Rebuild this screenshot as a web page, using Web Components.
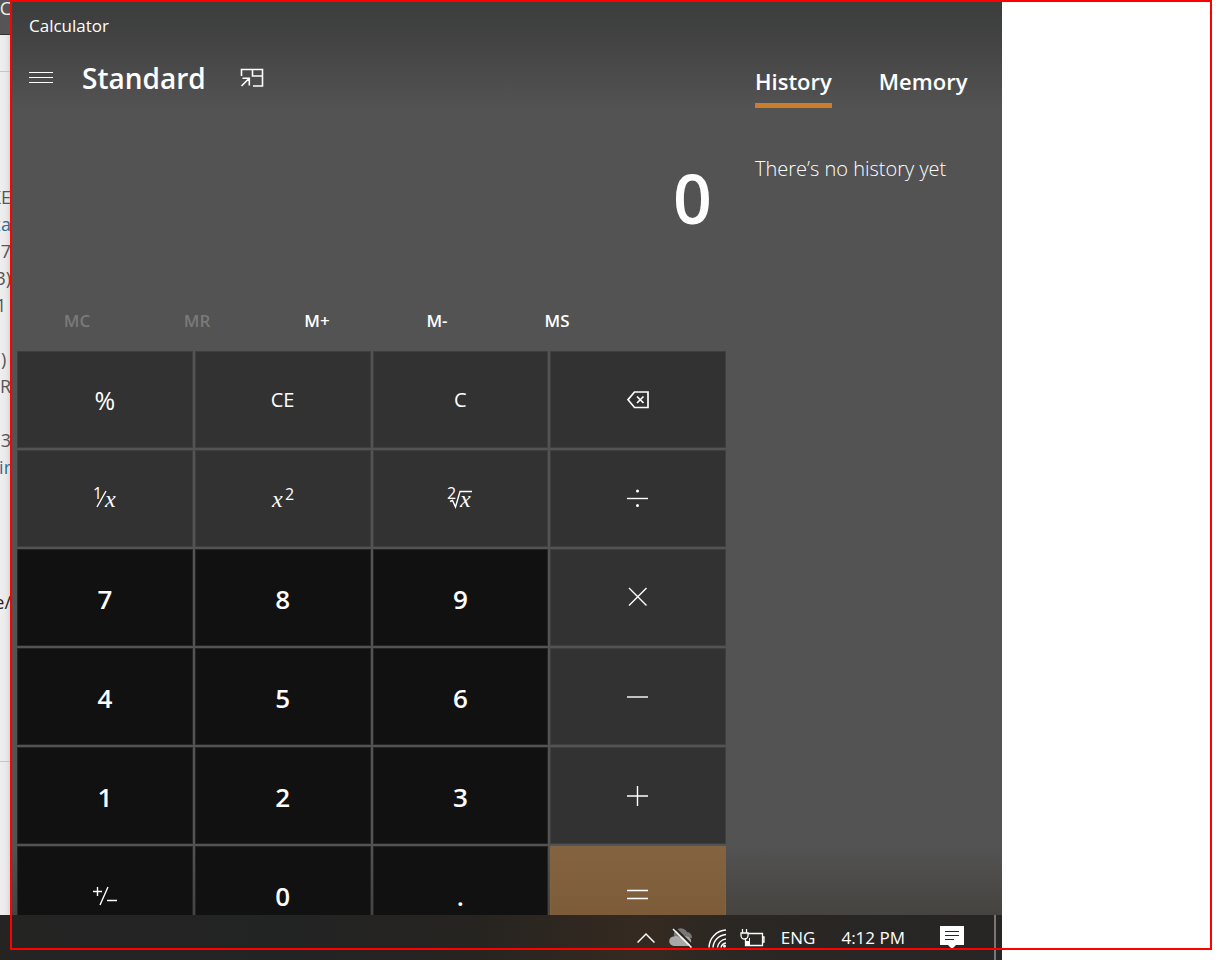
<!DOCTYPE html>
<html lang="en">
<head>
<meta charset="utf-8">
<title>Calculator</title>
<style>
  html, body { margin: 0; height: 100%; background: #fff; }
  body { font-family: "Open Sans", "Noto Sans", sans-serif; color: #fff; }
</style>
</head>
<body>
<desktop-view>
  <page-edge slot="behind"></page-edge>
  <calc-window slot="window">
    <history-panel slot="side"></history-panel>
  </calc-window>
  <task-bar slot="bar"></task-bar>
</desktop-view>

<template id="desktop-view">
  <style>
    :host { display: block; position: relative; height: 100vh; overflow: hidden; }
    .screen { margin-right: 220px; height: 100%; display: flex; flex-direction: column; }
    .work { flex: 1; min-height: 0; display: flex; }
    ::slotted([slot=behind]) { flex: 0 0 12px; }
    ::slotted([slot=window]) { flex: 1; min-width: 0; }
    .frame { position: absolute; inset: 0 10px 10px 10px; border: 2px solid #f00; pointer-events: none; }
  </style>
  <div class="screen">
    <div class="work"><slot name="behind"></slot><slot name="window"></slot></div>
    <slot name="bar"></slot>
  </div>
  <div class="frame"></div>
</template>

<template id="page-edge">
  <style>
    :host { display: flex; flex-direction: column; overflow: hidden; color: #555; font-size: 18px; line-height: 27px;
      background: linear-gradient(90deg, #efefef, #e9e9e9 50%, #d2d2d2); }
    .line { display: flex; justify-content: flex-end; height: 27px; padding-right: 1px; white-space: pre; }
    .top { height: 34px; background: #555; border-bottom: 1px solid #333; color: #eee; }
    .top .line { height: 16px; line-height: 16px; }
    .bar { height: 36px; border-bottom: 1px solid #c4c4c4; }
    .text { padding-top: 112px; height: 577px; border-bottom: 1px solid #c4c4c4; }
    .blue { color: #2f6c96; }
    .dark { color: #222; }
  </style>
  <div class="top"><div class="line">TC</div></div>
  <div class="bar"></div>
  <div class="text">
    <div class="line">KE</div>
    <div class="line blue">xa</div>
    <div class="line">7</div>
    <div class="line">3)</div>
    <div class="line">1 </div>
    <div class="line"></div>
    <div class="line">) </div>
    <div class="line">R</div>
    <div class="line"></div>
    <div class="line">3</div>
    <div class="line blue">ir</div>
    <div class="line"></div>
    <div class="line"></div>
    <div class="line"></div>
    <div class="line"></div>
    <div class="line dark">e/</div>
  </div>
</template>

<template id="calc-window">
  <style>
    :host { display: flex; overflow: hidden;
      background: linear-gradient(#3b3c3c, #434343 40px, #535353 110px, #535353 calc(100% - 70px), #464340); }
    main { flex: 1; min-width: 0; padding-left: 5px; }
    .title { padding: 14px 0 0 12px; font-size: 17px; line-height: 24px; }
    header { display: flex; align-items: center; height: 40px; padding: 20px 0 0 12px; }
    button { all: unset; display: block; }
    svg { display: block; fill: none; stroke: #fff; }
    h1 { margin: 0 34px 0 29px; font-size: 28px; line-height: 40px; font-weight: 600; }
    output { display: block; height: 96px; margin-top: 52px; padding-right: 14px; text-align: right; font-size: 68px; line-height: 96px; font-weight: 600; }
    .memory { display: grid; grid-template-columns: repeat(5, 120px); height: 60px; margin-top: 45px; }
    .memory button { text-align: center; font-size: 17px; line-height: 58px; font-weight: 600; }
    .memory button:disabled { color: #7a7a7a; }
    .keys { display: grid; grid-template-columns: repeat(4, 1fr); grid-auto-rows: 97px; gap: 2px; }
  </style>
  <main>
    <div class="title">Calculator</div>
    <header>
      <button aria-label="Open navigation"><svg width="24" height="14"><path d="M0 1.500h24M0 6.500h24M0 11.500h24"/></svg></button>
      <h1>Standard</h1>
      <button aria-label="Keep on top"><svg width="24" height="22" stroke-width="1.600"><path d="M1.500 9V2.500H22.500V19H13M12.500 2.500V9H22.500M1.500 19L9 11.500M2.500 11.200H9.300V18.500"/></svg></button>
    </header>
    <output>0</output>
    <div class="memory">
      <button disabled>MC</button><button disabled>MR</button><button>M+</button><button>M-</button><button>MS</button>
    </div>
    <div class="keys">
      <calc-key><span>%</span></calc-key>
      <calc-key>CE</calc-key>
      <calc-key>C</calc-key>
      <calc-key icon="back"></calc-key>
      <calc-key icon="inverse"></calc-key>
      <calc-key icon="square"></calc-key>
      <calc-key icon="root"></calc-key>
      <calc-key icon="divide"></calc-key>
      <calc-key kind="digit">7</calc-key>
      <calc-key kind="digit">8</calc-key>
      <calc-key kind="digit">9</calc-key>
      <calc-key icon="times"></calc-key>
      <calc-key kind="digit">4</calc-key>
      <calc-key kind="digit">5</calc-key>
      <calc-key kind="digit">6</calc-key>
      <calc-key icon="minus"></calc-key>
      <calc-key kind="digit">1</calc-key>
      <calc-key kind="digit">2</calc-key>
      <calc-key kind="digit">3</calc-key>
      <calc-key icon="plus"></calc-key>
      <calc-key kind="digit" icon="sign"></calc-key>
      <calc-key kind="digit">0</calc-key>
      <calc-key kind="digit">.</calc-key>
      <calc-key kind="equals" icon="equals"></calc-key>
    </div>
  </main>
  <slot name="side"></slot>
</template>

<template id="calc-key">
  <style>
    :host { display: grid; --fill: #323232; --edge: #3f3f3f; }
    :host([kind=digit]) { --fill: #111; --edge: #252525; }
    :host([kind=equals]) { --fill: linear-gradient(#846440, #7c5b39 70px); --edge: #7f6343; }
    button { box-sizing: border-box; display: flex; align-items: center; justify-content: center; width: 100%; margin: 0; padding: 0;
      border: 1px solid var(--edge); background: var(--fill); color: #fff; font: 400 20px/28px "Open Sans", "Noto Sans", sans-serif; }
    :host([kind=digit]) button { font-size: 26px; line-height: 36px; font-weight: 600; padding-top: 3px; }
    ::slotted(span) { font-size: 25px; }
    svg { display: block; fill: none; stroke: #fff; stroke-width: 1.4; }
    svg text { fill: #fff; stroke: none; font-family: "Open Sans", "Noto Sans", sans-serif; font-weight: 400; }
    svg .x { font-family: "Liberation Serif", serif; font-style: italic; font-size: 24px; }
  </style>
  <button><slot></slot></button>
</template>

<template id="history-panel">
  <style>
    :host { display: block; box-sizing: border-box; flex: 0 0 276px; padding: 65px 0 0 29px; }
    nav { display: flex; gap: 47px; }
    button { all: unset; font-size: 22px; line-height: 32px; font-weight: 600; padding-bottom: 6px; border-bottom: 5px solid transparent; }
    button[aria-selected=true] { border-color: #ca7d2b; }
    p { margin: 45px 0 0; font-size: 20px; line-height: 32px; font-weight: 300; white-space: nowrap; }
  </style>
  <nav role="tablist"><button role="tab" aria-selected="true">History</button><button role="tab" aria-selected="false">Memory</button></nav>
  <p>There’s no history yet</p>
</template>

<template id="task-bar">
  <style>
    :host { box-sizing: border-box; flex: 0 0 45px; display: flex; align-items: center; justify-content: flex-end; padding-right: 6px;
      font-size: 17px; line-height: 24px; white-space: nowrap;
      background: linear-gradient(90deg, #252423, #222323 30%, #272420 48%, #352a20 64%, #2a2724 74%, #272625); }
    button { all: unset; display: block; }
    svg { display: block; fill: none; stroke: #fff; }
    .tray { display: flex; align-items: center; gap: 14px; }
    .lang { margin-left: 2px; }
    .time { margin: 0 35px 0 26px; }
    .peek { width: 2px; height: 45px; margin-left: 30px; background: #777; }
  </style>
  <div class="tray">
    <button aria-label="Show hidden icons"><svg width="18" height="12" stroke-width="1.500"><path d="M.500 10.500L9 2l8.500 8.500"/></svg></button>
    <button aria-label="Cloud storage"><svg width="25" height="20"><g stroke="none"><path fill="#777" d="M5 9a7 7 0 0 1 13-5a5.500 5.500 0 0 1 5 6z"/><path fill="#a8a8a8" d="M5 18a4.800 4.800 0 0 1 0-9.600q3-1 6 1q4-2 7-1a5 5 0 0 1 1 9.600z"/></g><path stroke="#2d2620" stroke-width="2" d="M6 0L24 18"/><path stroke-width="1.500" d="M4 1L22.500 19.500"/></svg></button>
    <button aria-label="Network"><svg width="18" height="20" stroke-width="1.400"><path d="M1 19.500A18 18 0 0 1 18 2M5 19.500A14 14 0 0 1 18 6.500M9.500 19.500A10 10 0 0 1 18 11M13 19.500A6 6 0 0 1 18 15"/><circle cx="16.500" cy="18" r="1.500" fill="#fff" stroke="none"/></svg></button>
    <button aria-label="Battery"><svg width="25" height="18" stroke-width="1.300"><path d="M8 4.500H22.500V16.500H5.500V9M22.500 8H24V13H22.500M2.500 0V4M6.500 0V4M1 4H8V6.500A3.500 3.500 0 0 1 1 6.500Z"/><path fill="#fff" stroke="none" d="M6 16V12H9V9L10 9V16z"/></svg></button>
    <span class="lang">ENG</span>
  </div>
  <span class="time">4:12 PM</span>
  <button aria-label="Notifications"><svg width="24" height="24"><path fill="#fff" stroke="none" d="M0 0H24V19H16L12 23L8 19H0z"/><path stroke="#272625" d="M5 5.500H19M5 9.500H19M5 13.500H14"/></svg></button>
  <div class="peek"></div>
</template>

<script>
  const icons = {
    back: ['Backspace', 22, 18, '<path stroke-width="1.700" d="M7.500 1H21V16.500H7.500L1 8.700ZM10 5.500L16.500 12M16.500 5.500L10 12"/>'],
    inverse: ['Reciprocal', 24, 28, '<text x="0" y="14" font-size="16">1</text><path d="M4 22L13 6"/><text class="x" x="12" y="22">x</text>'],
    square: ['Square', 24, 28, '<text class="x" x="1" y="22">x</text><text x="14" y="15" font-size="16">2</text>'],
    root: ['Square root', 26, 28, '<text x="0" y="14" font-size="16">2</text><path d="M3 16.500L5.500 15.500L8.500 22L13 6.500H25"/><text class="x" x="13" y="22">x</text>'],
    divide: ['Divide', 22, 24, '<path d="M0 11.500H21"/><circle cx="10.500" cy="4" r="1.500" fill="#fff" stroke="none"/><circle cx="10.500" cy="18.500" r="1.500" fill="#fff" stroke="none"/>'],
    times: ['Multiply', 22, 22, '<path d="M2 1L19.500 18.500M19.500 1L2 18.500"/>'],
    minus: ['Subtract', 22, 22, '<path d="M0 11H21"/>'],
    plus: ['Add', 22, 22, '<path d="M0 11H21M10.500 1V21"/>'],
    equals: ['Equals', 22, 22, '<path d="M0 6.500H21M0 14.500H21"/>'],
    sign: ['Change sign', 26, 28, '<path d="M1 9.500H10M5.500 5V14M8 23L16 5M15 18.500H25"/>']
  };

  class TemplateElement extends HTMLElement {
    constructor() {
      super();
      this.attachShadow({ mode: 'open' }).append(document.getElementById(this.localName).content.cloneNode(true));
    }
  }

  customElements.define('calc-key', class extends TemplateElement {
    connectedCallback() {
      const icon = icons[this.getAttribute('icon')];
      if (!icon) return;
      const [label, w, h, body] = icon;
      const button = this.shadowRoot.querySelector('button');
      button.setAttribute('aria-label', label);
      button.innerHTML = `<svg width="${w}" height="${h}">${body}</svg>`;
    }
  });
  for (const name of ['history-panel', 'calc-window', 'page-edge', 'task-bar', 'desktop-view'])
    customElements.define(name, class extends TemplateElement {});
</script>
</body>
</html>
